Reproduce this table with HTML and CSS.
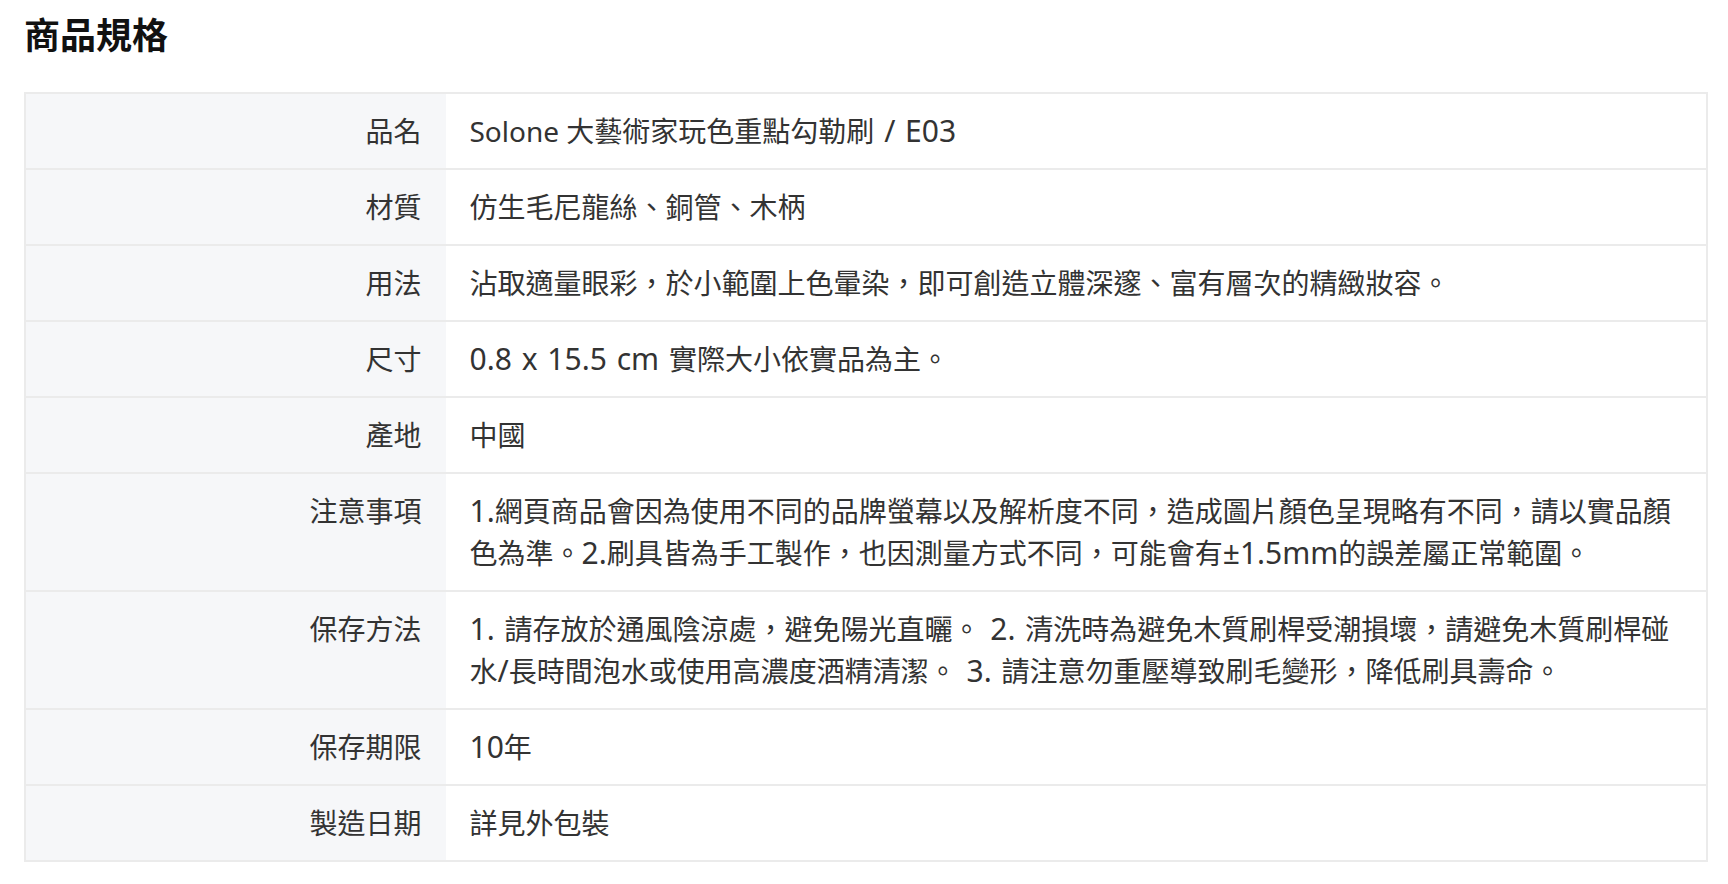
FILE: index.html
```html
<!DOCTYPE html>
<html lang="zh-Hant">
<head>
<meta charset="utf-8">
<title>商品規格</title>
<link rel="stylesheet" href="styles.css">
</head>
<body>
<section class="spec">
  <h2 class="spec-title">商品規格</h2>
  <table class="spec-table">
    <tbody>
      <tr><th>品名</th><td>Solone 大藝術家玩色重點勾勒刷<span class="lat"> / E03</span></td></tr>
      <tr><th>材質</th><td>仿生毛尼龍絲、銅管、木柄</td></tr>
      <tr><th>用法</th><td>沾取適量眼彩，於小範圍上色暈染，即可創造立體深邃、富有層次的精緻妝容。</td></tr>
      <tr><th>尺寸</th><td><span class="lat">0.8 x 15.5 cm </span>實際大小依實品為主。</td></tr>
      <tr><th>產地</th><td>中國</td></tr>
      <tr><th>注意事項</th><td><span class="lat">1.</span>網頁商品會因為使用不同的品牌螢幕以及解析度不同，造成圖片顏色呈現略有不同，請以實品顏色為準。<span class="lat">2.</span>刷具皆為手工製作，也因測量方式不同，可能會有<span class="lat">±1.5mm</span>的誤差屬正常範圍。</td></tr>
      <tr><th>保存方法</th><td><span class="lat">1. </span>請存放於通風陰涼處，避免陽光直曬。<span class="lat"> 2. </span>清洗時為避免木質刷桿受潮損壞，請避免木質刷桿碰水<span class="lat">/</span>長時間泡水或使用高濃度酒精清潔。<span class="lat"> 3. </span>請注意勿重壓導致刷毛變形，降低刷具壽命。</td></tr>
      <tr><th>保存期限</th><td><span class="lat">10</span>年</td></tr>
      <tr><th>製造日期</th><td>詳見外包裝</td></tr>
    </tbody>
  </table>
</section>
</body>
</html>
```
FILE: styles.css
```css
html, body {
  margin: 0;
  padding: 0;
  background: #ffffff;
}
body {
  font-family: "Noto Sans", "Noto Sans CJK TC", sans-serif;
  color: #333333;
}
.spec {
  padding: 12px 20px 0 24px;
}
.spec-title {
  margin: 0 0 37px 0;
  font-family: "Noto Sans CJK TC", sans-serif;
  font-size: 36px;
  line-height: 43px;
  font-weight: 700;
  color: #111111;
}
.spec-table {
  width: 100%;
  border-collapse: collapse;
  border: 2px solid #ebebeb;
  font-size: 28px;
  line-height: 42px;
}
.spec-table th,
.spec-table td {
  border-top: 2px solid #ebebeb;
  padding: 16px 24px;
  vertical-align: top;
}
.spec-table th {
  width: 25%;
  box-sizing: border-box;
  background: #f6f7f9;
  text-align: right;
  font-weight: 400;
  color: #333333;
  padding-right: 24px;
}
.spec-table td {
  text-align: left;
  color: #333333;
}
.lat {
  font-family: "Noto Sans", sans-serif;
  font-size: 30px;
  line-height: 42px;
  word-spacing: 2px;
}
```
